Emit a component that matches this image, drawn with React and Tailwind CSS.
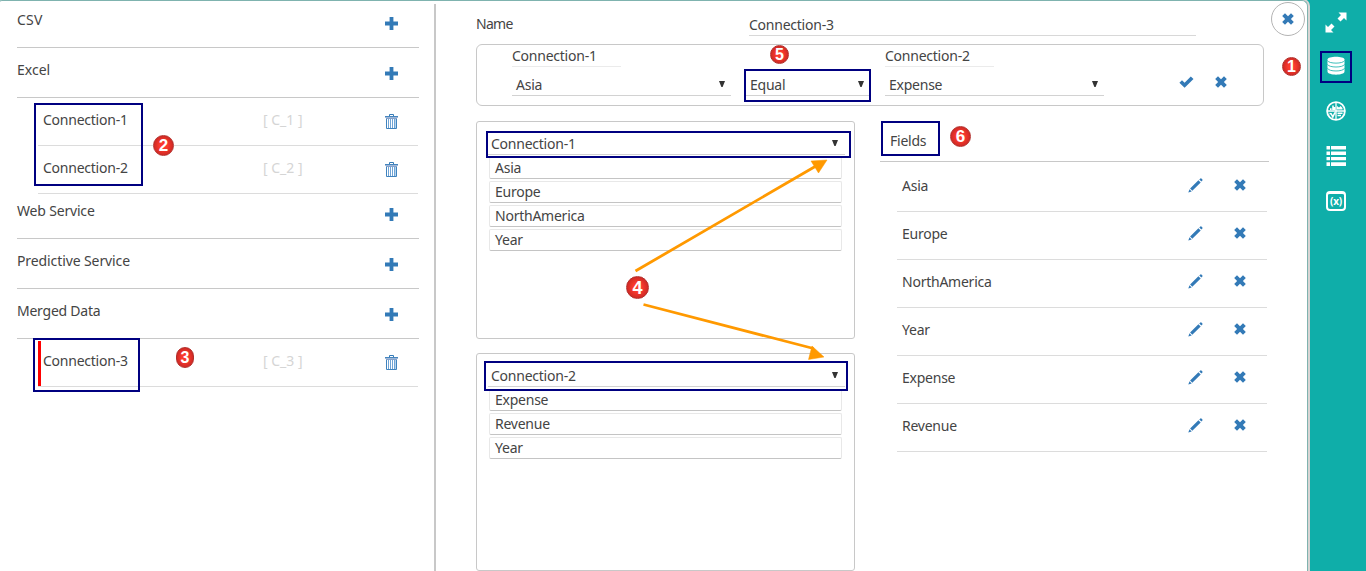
import React from "react";

const Plus = () => (
  <svg width="13" height="13" viewBox="0 0 13 13" fill="#337ab7">
    <path d="M4.600 0h3.800v4.600H13v3.800H8.400V13H4.600V8.400H0V4.600h4.600z" />
  </svg>
);

const Trash = () => (
  <svg width="13" height="15" viewBox="0 0 13 15" fill="none">
    <path d="M4.500 2V.5h4V2" stroke="#337ab7" />
    <path d="M0 2.500h13" stroke="#4585be" />
    <path d="M0 3.500h13" stroke="#9db7d8" />
    <path d="M1 4.500h11" stroke="#86a2cb" />
    <path d="M1.500 5v9.500h10V5" stroke="#3f82bd" />
    <path d="M3.500 5v9M5.500 5v9M7.500 5v9M9.500 5v9" stroke="#6fa4d6" />
    <path d="M10.500 5v9" stroke="#b3d4ee" />
  </svg>
);

const Cross = () => (
  <svg width="12" height="12" viewBox="0 0 12 12" fill="#337ab7">
    <path d="M3 .300 6 3.200 9 .300 11.800 3 8.900 6l2.900 3-2.800 2.700-3-2.900-3 2.900L.200 9l2.900-3L.200 3z" />
  </svg>
);

const Check = () => (
  <svg width="15" height="12" viewBox="0 0 15 12" fill="#337ab7">
    <path d="M.400 6.800 3 4.300 5.600 6.800 11.800.400l2.700 2.600-8.900 8.800z" />
  </svg>
);

const Pencil = () => (
  <svg width="15" height="15" viewBox="0 0 15 15" fill="#337ab7">
    <path d="M11.300 1.600 12.400.500q.5-.4 1 0l1 1q.4.5 0 1l-1.100 1.100zM10.400 2.300l2.300 2.300-8.400 8.200-2.200-2.200zM1.500 11.300l2.200 2.100L.300 14.600z" />
  </svg>
);

const Caret = () => (
  <svg className="mb-[2px]" width="6" height="6" viewBox="0 0 6 6" fill="#333">
    <path d="M0 0h6L3.600 6H2.400z" />
  </svg>
);

const Section = ({ label, h, ls }) => (
  <div className={`flex items-end justify-between border-b border-[#c8c8c8] pr-[21px] ${h}`}>
    <span className={`pb-[17px] leading-5 ${ls}`}>{label}</span>
    <span className="pb-[17px]"><Plus /></span>
  </div>
);

const Connection = ({ name, id, active }) => (
  <div className="ml-[21px] mr-px flex h-12 border-b border-[#dcdcdc]">
    <div className={`mt-[2px] flex h-[45px] w-[225px] border-l-[3px] pl-[2px] ${active ? "border-[#f00]" : "border-transparent"}`}>
      <span className="mt-[10px] leading-5">{name}</span>
    </div>
    <span className="mt-3 w-[122px] leading-5 tracking-normal text-[#d5d5d5]">{id}</span>
    <span className="mt-4"><Trash /></span>
  </div>
);

const Select = ({ value, className }) => (
  <div className={`flex items-center justify-between border-b border-[#d2d2d2] ${className}`}>
    <span className="leading-5">{value}</span>
    <Caret />
  </div>
);

const Source = ({ title, items, className }) => (
  <div className={`flex w-[379px] flex-col rounded-[3px] border border-[#c8c8c8] pl-[11px] ${className}`}>
    <Select value={title} className="h-[22px] w-[357px] pl-[3px] pr-[7px]" />
    <div className="ml-px mt-[2px] flex flex-col gap-[2px]">
      {items.map((item) => (
        <div key={item} className="flex h-[22px] w-[353px] items-center rounded-[2px] border border-[#e8e8e8] border-b-[#c4c4c4] pl-[5px] leading-5">
          {item}
        </div>
      ))}
    </div>
  </div>
);

const Field = ({ name }) => (
  <div className="ml-[17px] flex h-12 w-[370px] border-b border-[#dcdcdc] pl-[5px]">
    <span className="mt-3 w-[286px] leading-5">{name}</span>
    <span className="mt-[14px] w-[46px]"><Pencil /></span>
    <span className="mt-[15px]"><Cross /></span>
  </div>
);

const Badge = ({ n, className }) => (
  <div className={`absolute flex items-center justify-center rounded-full border border-[#b3302c] bg-radial from-[#fa3a2e] from-30% to-[#b41e1e] font-['Liberation_Sans',sans-serif] font-bold leading-none tracking-normal text-white ${className}`}>
    {n}
  </div>
);

const Outline = ({ className }) => <div className={`absolute border-2 border-[#000080] ${className}`} />;

const Expand = () => (
  <svg width="22" height="22" viewBox="0 0 22 22" fill="#fff">
    <path d="M13.500 1.500h8v8l-2.500-2.500-3.500 3.500-3-3L16 4zM.500 21.500v-8L3 16l3.500-3.500 3 3L6 19l2.500 2.500z" />
  </svg>
);

const Database = () => (
  <svg className="mb-px" width="18" height="19" viewBox="0 0 18 19">
    <path d="M.5 3.500C.5-.200 17.500-.200 17.500 3.500v12c0 4.200-17 4.200-17 0z" fill="#fff" />
    <path d="M.5 4.500c1 3.500 16 3.500 17 0M.5 8.300c1 3.600 16 3.600 17 0M.5 12.200c1 3.700 16 3.700 17 0" stroke="#0faea9" fill="none" strokeWidth=".8" />
  </svg>
);

const Globe = () => (
  <svg width="20" height="20" viewBox="0 0 20 20" fill="none" stroke="#fff">
    <circle cx="10" cy="10" r="8.900" strokeWidth="1.800" />
    <path d="M10 2v16M2 10h16" strokeWidth="1.300" />
    <path d="M4.800 7.200V9M7 9V4.500M8.600 9V6" strokeWidth="1.600" />
    <path d="M11 8.500V5l2 1.500 1.500-1.500 2 2v1.500z" fill="#fff" stroke="none" />
    <path d="M3.500 12.500l1.800.5 1.500 3 1.900-4h1M11.500 12.200h5M11.500 14.500h3.500" strokeWidth="1.500" />
  </svg>
);

const List = () => (
  <svg width="20" height="20" viewBox="0 0 20 20" fill="#fff">
    <path d="M.500 0h3.500v3.500H.500zM5 0h15v3.500H5zM.500 5.500h3.500V9H.500zM5 5.500h15V9H5zM.500 11h3.500v3.300H.500zM5 11h15v3.300H5zM.500 16.300h3.500V20H.500zM5 16.300h15V20H5z" />
  </svg>
);

export default function App() {
  return (
    <div className="relative flex h-[571px] w-[1366px] overflow-hidden bg-[#0faea9] font-['Noto_Sans',sans-serif] text-[14px] tracking-[-0.24px] text-[#444]">
      <main className="flex h-[580px] w-[1308px] shrink-0 rounded-tl-[2px] rounded-tr-[6px] border-r border-t border-[#7fb3af] bg-white shadow-[1px_0_0_1px_#d8d4d3]">
        <aside className="ml-[17px] w-[402px]">
          <Section label="CSV" h="h-[47px]" ls="tracking-[0.2px]" />
          <Section label="Excel" h="h-[50px]" ls="tracking-normal" />
          <Connection name="Connection-1" id="[ C_1 ]" />
          <Connection name="Connection-2" id="[ C_2 ]" />
          <Section label="Web Service" h="h-[45px]" ls="tracking-[-0.18px]" />
          <Section label="Predictive Service" h="h-[50px]" ls="tracking-[-0.1px]" />
          <Section label="Merged Data" h="h-[50px]" ls="" />
          <Connection name="Connection-3" id="[ C_3 ]" active />
        </aside>
        <div className="ml-[15px] mt-[3px] w-[2px] bg-[#c8c8c8]" />
        <section className="ml-10 w-[795px]">
          <div className="flex h-[43px]">
            <span className="mt-[13px] w-[273px] leading-5 tracking-[-0.7px]">Name</span>
            <div className="mt-[14px] h-[21px] w-[447px] border-b border-[#d8d8d8] leading-5">Connection-3</div>
          </div>
          <div className="flex h-[62px] w-[788px] rounded-[6px] border border-[#c8c8c8] pl-[35px]">
            <div className="w-[232px]">
              <div className="mt-[1px] h-[21px] w-[109px] border-b border-[#ebebeb] leading-5">Connection-1</div>
              <Select value="Asia" className="mt-2 h-[21px] w-[219px] pl-1 pr-[6px]" />
            </div>
            <div className="w-[141px] pt-[30px]">
              <Select value="Equal" className="h-[21px] w-[126px] pl-[6px] pr-[6px]" />
            </div>
            <div className="w-[294px]">
              <div className="mt-[1px] h-[21px] w-[109px] border-b border-[#ebebeb] leading-5">Connection-2</div>
              <Select value="Expense" className="mt-2 h-[21px] w-[219px] pl-1 pr-[6px]" />
            </div>
            <span className="mt-[31px] w-9"><Check /></span>
            <span className="mt-[31px]"><Cross /></span>
          </div>
          <div className="mt-[15px] flex">
            <div className="flex w-[404px] flex-col gap-[14px]">
              <Source title="Connection-1" items={["Asia", "Europe", "NorthAmerica", "Year"]} className="h-[218px] pt-[11px]" />
              <Source title="Connection-2" items={["Expense", "Revenue", "Year"]} className="h-[218px] pt-[11px]" />
            </div>
            <div className="w-[389px]">
              <div className="h-[41px] border-b border-[#c8c8c8] pl-[10px] pt-[10px] leading-5">Fields</div>
              <div className="-mt-px pt-[3px]">
                {["Asia", "Europe", "NorthAmerica", "Year", "Expense", "Revenue"].map((f) => <Field key={f} name={f} />)}
              </div>
            </div>
          </div>
        </section>
      </main>

      <nav className="ml-[2px] flex w-[52px] flex-col items-center gap-[13px] pt-[6px]">
        <span className="flex size-8 items-center justify-center"><Expand /></span>
        <span className="-mt-px flex size-8 items-center justify-center"><Database /></span>
        <span className="flex size-8 items-center justify-center"><Globe /></span>
        <span className="flex size-8 items-center justify-center"><List /></span>
        <span className="flex size-8 items-center justify-center">
          <span className="flex size-5 items-center justify-center rounded-[4px] border-2 border-t-[3px] border-white pb-px font-['Noto_Sans',sans-serif] text-[10px] font-bold leading-none text-white">(x)</span>
        </span>
      </nav>

      <div className="absolute left-[1271px] top-[2px] flex size-[34px] items-center justify-center rounded-full border border-[#b4b4b4] bg-white pb-px">
        <Cross />
      </div>

      <Outline className="left-[34px] top-[103px] h-[83px] w-[109px]" />
      <Outline className="left-[33px] top-[338px] h-[54px] w-[107px]" />
      <Outline className="left-[744px] top-[69px] h-[33px] w-[127px]" />
      <Outline className="left-[486px] top-[131px] h-[27px] w-[365px]" />
      <Outline className="left-[484px] top-[361px] h-[30px] w-[364px]" />
      <Outline className="left-[881px] top-[121px] h-[35px] w-[59px]" />
      <Outline className="left-[1320px] top-[51px] h-8 w-8" />

      <svg className="absolute left-[630px] top-[155px]" width="205" height="210" fill="#ff9900" stroke="#ff9900">
        <path d="M5.500 116 186 11M13.500 149.500l170 44" strokeWidth="2.800" />
        <path d="m197 5-8.500 13-7.500-12zM194 202l-15.500 2.500 3.500-13.500z" strokeWidth=".5" />
      </svg>

      <Badge n="1" className="left-[1282px] top-[57px] size-[19px] text-[16px]" />
      <Badge n="2" className="left-[153px] top-[135px] size-[21px] text-[17px]" />
      <Badge n="3" className="left-[176px] top-[347px] h-[21px] w-[18px] text-[16px]" />
      <Badge n="4" className="left-[626px] top-[276px] size-[23px] text-[18px]" />
      <Badge n="5" className="left-[770px] top-[45px] size-[19px] text-[16px]" />
      <Badge n="6" className="left-[950px] top-[126px] size-[21px] text-[17px]" />
    </div>
  );
}
